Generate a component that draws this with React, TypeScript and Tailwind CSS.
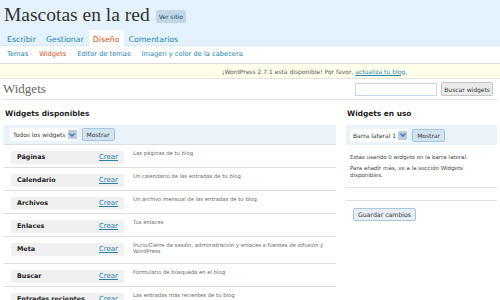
const widgets = [
  { name: 'Páginas', desc: 'Las páginas de tu blog' },
  { name: 'Calendario', desc: 'Un calendario de las entradas de tu blog' },
  { name: 'Archivos', desc: 'Un archivo mensual de las entradas de tu blog' },
  { name: 'Enlaces', desc: 'Tus enlaces' },
  { name: 'Meta', desc: 'Inicio/Cierre de sesión, administración y enlaces a fuentes de difusión y WordPress', tall: true },
  { name: 'Buscar', desc: 'Formulario de búsqueda en el blog' },
  { name: 'Entradas recientes', desc: 'Las entradas más recientes de tu blog' },
];

const Caret = () => (
  <span className="ml-[2px] flex h-[9px] w-[9px] items-center justify-center rounded-[1px] bg-[#b8cde0]">
    <svg width="6" height="4" viewBox="0 0 6 4">
      <path d="M0.5 0.5 L3 3.2 L5.5 0.5" fill="none" stroke="#3d6ea8" strokeWidth="1.2" />
    </svg>
  </span>
);

const App = () => {
  return (
    <div className="h-[300px] w-[500px] overflow-hidden bg-white font-['DejaVu_Sans',sans-serif] text-[#333]">
      {/* header */}
      <div className="h-[46px] bg-[#e4f2fd] border-b border-[#d9e8f4]">
        <div className="flex items-center gap-[6px] pl-[4px] pt-[1px]">
          <h1 className="font-['Liberation_Serif',serif] text-[19.5px] leading-[28px] text-[#333]">Mascotas en la red</h1>
          <span className="mt-[2px] rounded-[2px] bg-[#c1d7e8] px-[3px] py-[3px] text-[6px] leading-[7px] text-[#264761]">Ver sitio</span>
        </div>
        <div className="mt-[1px] flex items-end pl-[2px] text-[7.8px] text-[#2583ad]">
          <span className="px-[5px] py-[4px]">Escribir</span>
          <span className="px-[5px] py-[4px]">Gestionar</span>
          <span className="bg-white px-[4px] py-[4px] text-[#d54e21]">Diseño</span>
          <span className="px-[5px] py-[4px]">Comentarios</span>
        </div>
      </div>
      {/* submenu */}
      <div className="flex h-[18px] items-center gap-[11px] border-b border-[#dadada] pl-[7px] text-[6.7px] text-[#2583ad]">
        <span>Temas</span>
        <span className="text-[#d54e21]">Widgets</span>
        <span>Editor de temas</span>
        <span>Imagen y color de la cabecera</span>
      </div>
      {/* update nag */}
      <div className="flex h-[15px] items-center border-b border-[#e3e3e3] bg-[#fffeeb] pl-[222px] text-[6px] text-[#555]">
        <span>¡WordPress 2.7.1 está disponible! Por favor, <span className="text-[#2583ad] underline">actualiza tu blog</span>.</span>
      </div>
      {/* page heading */}
      <div className="mx-[3px] flex h-[21px] items-center justify-between border-b border-[#e2e2e2]">
        <h2 className="font-['Liberation_Serif',serif] text-[13px] text-[#666]">Widgets</h2>
        <div className="flex items-center gap-[4px] pr-[4px]">
          <div className="h-[13px] w-[82px] border border-[#c6d9e9] bg-white" />
          <span className="flex h-[14px] items-center rounded-[2px] border border-[#c6c6c6] bg-[#eaeaea] px-[2px] text-[6px] text-[#333]">Buscar widgets</span>
        </div>
      </div>
      <div className="flex gap-[10px] px-[3px]">
        {/* left column */}
        <div className="w-[333px]">
          <h3 className="pl-[2px] pt-[8px] pb-[6px] text-[7.4px] font-bold text-[#222]">Widgets disponibles</h3>
          <div className="flex h-[20px] items-center gap-[4px] border-b border-[#dfdfdf] bg-[#eaf3fa] pl-[7px]">
            <div className="flex h-[13px] items-center bg-white pl-[3px] pr-[1px] text-[6px]">
              Todos los widgets <Caret />
            </div>
            <span className="flex h-[13px] items-center rounded-[2px] border border-[#a9c6dc] bg-[#d3e4f1] px-[4px] text-[6px] text-[#333]">Mostrar</span>
          </div>
          {widgets.map((w) => (
            <div key={w.name} className={`flex border-b border-[#dfdfdf] pl-[8px] pt-[6px] ${w.tall ? 'h-[27px]' : 'h-[23px]'}`}>
              <div className="flex h-[13px] w-[113px] shrink-0 items-center justify-between rounded-[2px] bg-[#f0f0f0] pl-[6px] pr-[6px]">
                <span className="text-[6.4px] font-bold text-[#222]">{w.name}</span>
                <span className="text-[7px] text-[#2583ad] underline">Crear</span>
              </div>
              <p className="-mt-[1px] w-[205px] pl-[9px] text-[5.3px] leading-[6px] text-[#666]">{w.desc}</p>
            </div>
          ))}
        </div>
        {/* right column */}
        <div className="flex-1">
          <h3 className="pl-[1px] pt-[8px] pb-[6px] text-[7.4px] font-bold text-[#222]">Widgets en uso</h3>
          <div className="flex h-[20px] items-center gap-[4px] bg-[#eaf3fa] pl-[4px]">
            <div className="flex h-[13px] items-center bg-white pl-[3px] pr-[1px] text-[6px]">
              Barra lateral 1 <Caret />
            </div>
            <span className="flex h-[13px] items-center rounded-[2px] border border-[#a9c6dc] bg-[#d3e4f1] px-[4px] text-[6px] text-[#333]">Mostrar</span>
          </div>
          <div className="border-b border-[#dfdfdf] pl-[4px] pt-[9px] pb-[8px] text-[5.5px] leading-[7px] text-[#444]">
            <p>Estás usando 0 widgets en la barra lateral.</p>
            <p className="mt-[4px] w-[125px]">Para añadir más, ve a la sección Widgets disponibles.</p>
          </div>
          <div className="mt-[12px] flex border-t border-[#dfdfdf] pl-[7px] pt-[7px]">
            <span className="flex h-[13px] items-center rounded-[2px] border border-[#a9c6dc] bg-[#e8eef3] px-[4px] text-[6.2px] text-[#333]">Guardar cambios</span>
          </div>
        </div>
      </div>
    </div>
  );
};

export default App;
